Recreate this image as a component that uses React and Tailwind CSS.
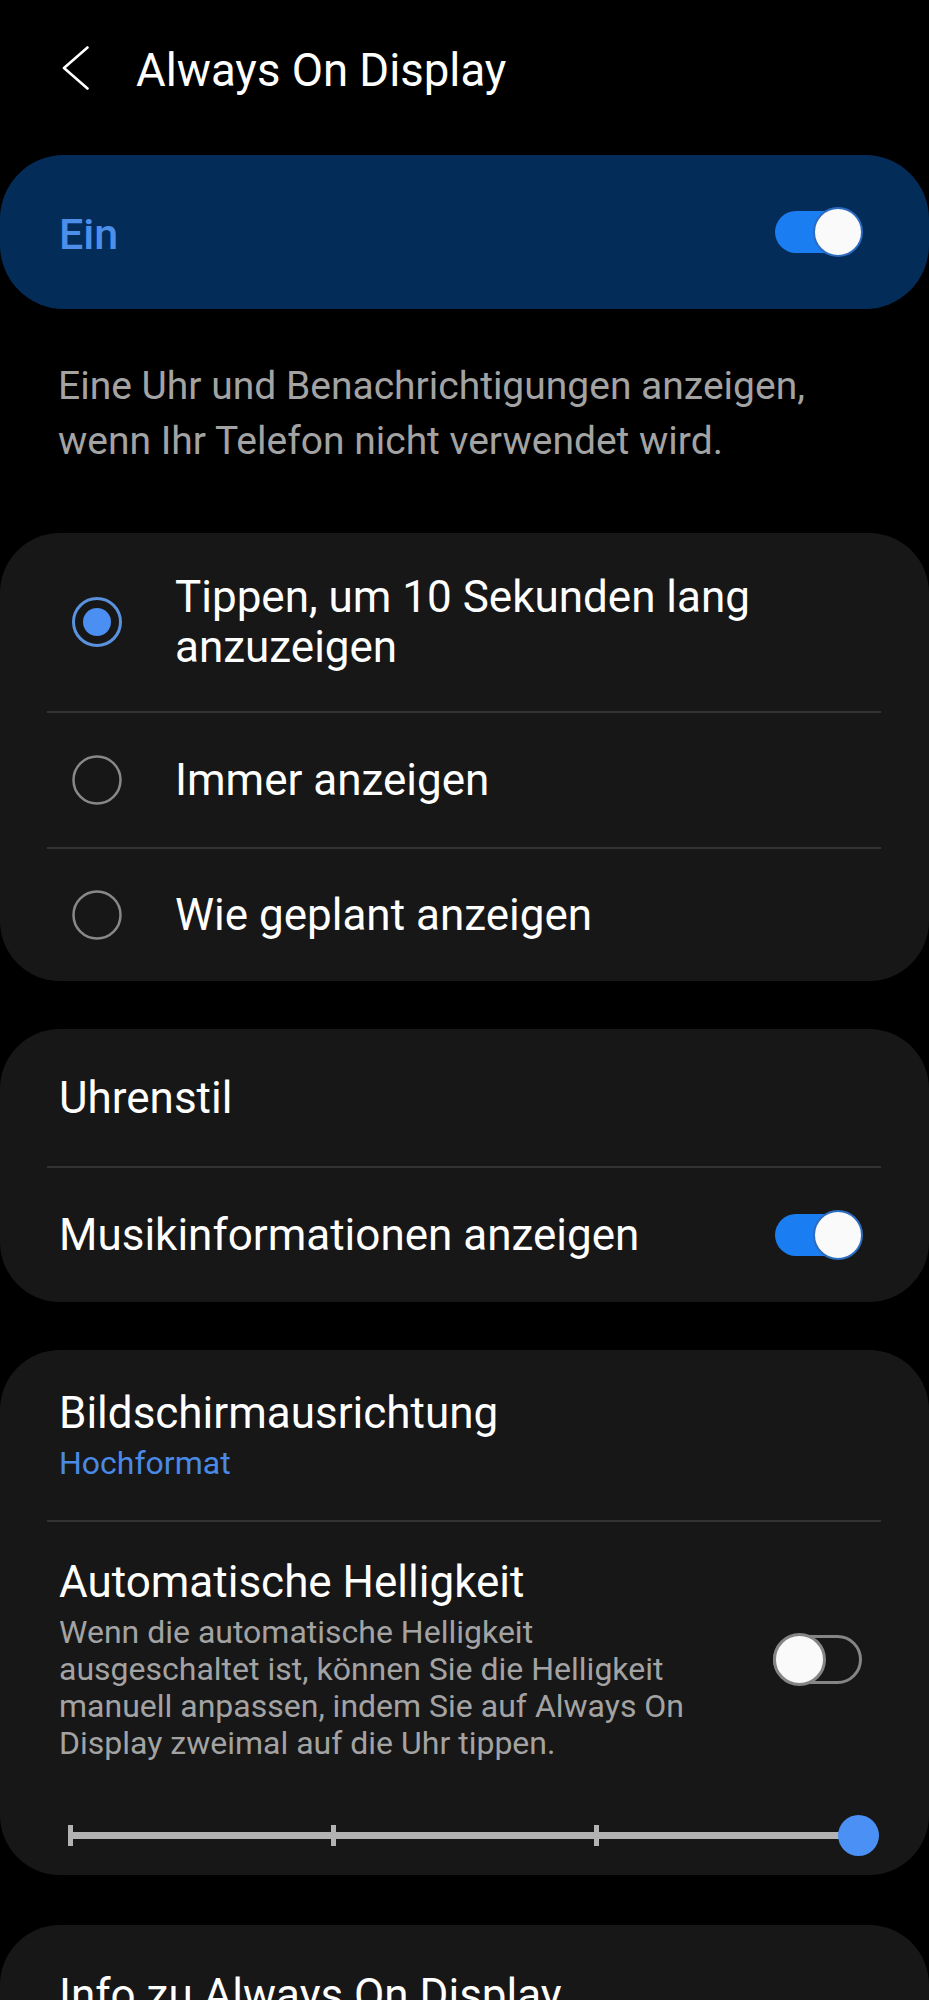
import React from "react";

const Toggle = ({ on }) =>
  on ? (
    <div className="relative w-[88px] h-[50px] shrink-0">
      <div className="absolute left-0 top-[4px] w-[80px] h-[42px] rounded-full bg-[#1b7df2]" />
      <div className="absolute right-0 top-0 w-[50px] h-[50px] rounded-full bg-[#fafafa] border-2 border-[#2c6cc0]" />
    </div>
  ) : (
    <div className="relative w-[89px] h-[53px] shrink-0">
      <div className="absolute left-0 top-[2px] w-[89px] h-[49px] rounded-full border-[3px] border-[#858585]" />
      <div className="absolute left-0 top-0 w-[53px] h-[53px] rounded-full bg-[#fafafa] border-[3px] border-[#858585]" />
    </div>
  );

const Radio = ({ checked }) => (
  <svg width="50" height="50" viewBox="0 0 50 50" className="shrink-0">
    <circle
      cx="25"
      cy="25"
      r="23.5"
      fill="none"
      stroke={checked ? "#5a92de" : "#888888"}
      strokeWidth={checked ? 3 : 2.5}
    />
    {checked && <circle cx="25" cy="25" r="14" fill="#4b8ff2" />}
  </svg>
);

const Divider = () => <div className="h-[2px] ml-[47px] mr-[48px] bg-[#333333]" />;

export default function App() {
  const options = [
    { label: ["Tippen, um 10 Sekunden lang", "anzuzeigen"], checked: true, h: "h-[178px]" },
    { label: ["Immer anzeigen"], checked: false, h: "h-[134px]" },
    { label: ["Wie geplant anzeigen"], checked: false, h: "h-[132px]" },
  ];

  return (
    <div className="min-h-screen bg-black text-white font-['Roboto','Liberation_Sans',sans-serif] pb-10 overflow-hidden">
      {/* Header */}
      <div className="flex h-[55px] mt-[43px]">
        <svg width="27" height="44" viewBox="0 0 27 44" className="ml-[62px] mt-[3px]">
          <polyline points="25.5,1.5 2,22 25.5,42.5" fill="none" stroke="#ffffff" strokeWidth="2.6" strokeLinecap="round" strokeLinejoin="round" />
        </svg>
        <h1 className="ml-[47px] text-[45.5px] leading-[55px] font-normal">Always On Display</h1>
      </div>

      {/* Master switch */}
      <div className="mt-[57px] h-[154px] rounded-[64px] bg-[#042c59] flex items-center justify-between pl-[59px] pr-[66px]">
        <span className="mt-[4px] text-[43px] leading-[50px] font-medium text-[#4b8fe9]">Ein</span>
        <Toggle on />
      </div>

      <p className="mt-[50px] px-[58px] text-[39px] leading-[55px] text-[#a3a3a3]">
        Eine Uhr und Benachrichtigungen anzeigen,
        <br />
        wenn Ihr Telefon nicht verwendet wird.
      </p>

      {/* Display mode */}
      <div className="mt-[64px] rounded-[60px] bg-[#171717]">
        {options.map((opt, i) => (
          <React.Fragment key={i}>
            {i > 0 && <Divider />}
            <div className={`flex items-center pl-[72px] ${opt.h}`}>
              <Radio checked={opt.checked} />
              <span className="ml-[53px] text-[44px] leading-[50px]">
                {opt.label[0]}
                {opt.label[1] && (
                  <>
                    <br />
                    {opt.label[1]}
                  </>
                )}
              </span>
            </div>
          </React.Fragment>
        ))}
      </div>

      {/* Clock + music */}
      <div className="mt-[48px] rounded-[60px] bg-[#171717]">
        <div className="h-[137px] flex items-center pl-[59px]">
          <span className="text-[44px] leading-[50px]">Uhrenstil</span>
        </div>
        <Divider />
        <div className="h-[134px] flex items-center justify-between pl-[59px] pr-[66px]">
          <span className="text-[44px] leading-[50px]">Musikinformationen anzeigen</span>
          <Toggle on />
        </div>
      </div>

      {/* Orientation + brightness */}
      <div className="mt-[48px] rounded-[60px] bg-[#171717] pb-[19px]">
        <div className="h-[170px] flex flex-col justify-center pl-[59px]">
          <span className="text-[44px] leading-[50px]">Bildschirmausrichtung</span>
          <span className="mt-[6px] text-[32px] leading-[38px] text-[#4a8ae6]">Hochformat</span>
        </div>
        <Divider />
        <div className="pt-[35px] flex items-center justify-between pl-[59px] pr-[67px]">
          <div className="flex-1">
            <div className="text-[44px] leading-[50px]">Automatische Helligkeit</div>
            <p className="mt-[7px] text-[32px] leading-[37px] text-[#a3a3a3]">
              Wenn die automatische Helligkeit
              <br />
              ausgeschaltet ist, können Sie die Helligkeit
              <br />
              manuell anpassen, indem Sie auf Always On
              <br />
              Display zweimal auf die Uhr tippen.
            </p>
          </div>
          <Toggle on={false} />
        </div>

        {/* Brightness slider */}
        <div className="relative mt-[53px] ml-[68px] mr-[50px] h-[41px]">
          <div className="absolute left-0 right-[20px] top-[17px] h-[7px] bg-[#b3b3b3]" />
          <div className="absolute left-0 top-[10px] w-[5px] h-[21px] bg-[#b3b3b3]" />
          <div className="absolute left-[263px] top-[10px] w-[5px] h-[21px] bg-[#b3b3b3]" />
          <div className="absolute left-[526px] top-[10px] w-[5px] h-[21px] bg-[#b3b3b3]" />
          <div className="absolute right-0 top-0 w-[41px] h-[41px] rounded-full bg-[#4a90f5]" />
        </div>
      </div>

      {/* Info */}
      <div className="mt-[50px] h-[200px] rounded-[60px] bg-[#171717] pt-[45px] pl-[59px]">
        <span className="text-[44px] leading-[50px]">Info zu Always On Display</span>
      </div>
    </div>
  );
}
